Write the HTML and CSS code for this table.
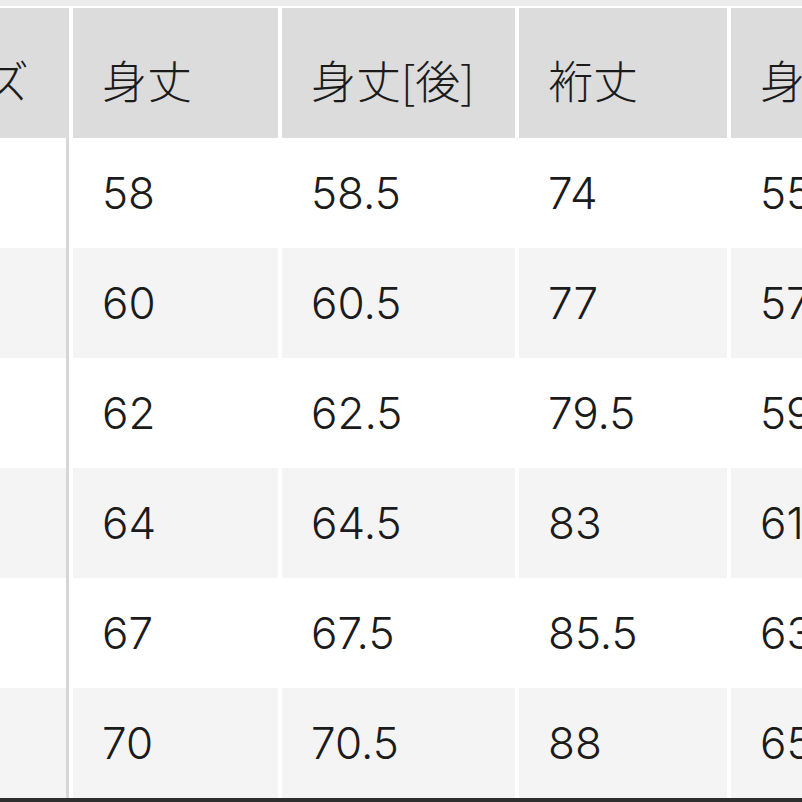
FILE: index.html
```html
<!DOCTYPE html>
<html lang="ja">
<head>
<meta charset="utf-8">
<link rel="stylesheet" href="styles.css">
</head>
<body>
<div class="page">
  <div class="top-strip"></div>
  <div class="table">
    <div class="row head">
      <div class="cell key"><span>サイズ</span></div>
      <div class="cell">身丈</div>
      <div class="cell">身丈[後]</div>
      <div class="cell">裄丈</div>
      <div class="cell">身幅</div>
    </div>
    <div class="row">
      <div class="cell key"><span>XS</span></div>
      <div class="cell">58</div>
      <div class="cell">58.5</div>
      <div class="cell">74</div>
      <div class="cell">55</div>
    </div>
    <div class="row alt">
      <div class="cell key"><span>S</span></div>
      <div class="cell">60</div>
      <div class="cell">60.5</div>
      <div class="cell">77</div>
      <div class="cell">57</div>
    </div>
    <div class="row">
      <div class="cell key"><span>M</span></div>
      <div class="cell">62</div>
      <div class="cell">62.5</div>
      <div class="cell">79.5</div>
      <div class="cell">59</div>
    </div>
    <div class="row alt">
      <div class="cell key"><span>L</span></div>
      <div class="cell">64</div>
      <div class="cell">64.5</div>
      <div class="cell">83</div>
      <div class="cell">61</div>
    </div>
    <div class="row">
      <div class="cell key"><span>XL</span></div>
      <div class="cell">67</div>
      <div class="cell">67.5</div>
      <div class="cell">85.5</div>
      <div class="cell">63</div>
    </div>
    <div class="row alt">
      <div class="cell key"><span>XXL</span></div>
      <div class="cell">70</div>
      <div class="cell">70.5</div>
      <div class="cell">88</div>
      <div class="cell">65</div>
    </div>
  </div>
  <div class="bottom-bar"></div>
</div>
</body>
</html>
```
FILE: styles.css
```css
html, body {
  margin: 0;
  padding: 0;
  background: #ffffff;
}

.page {
  width: 802px;
  height: 802px;
  overflow: hidden;
  display: flex;
  flex-direction: column;
}

.top-strip {
  height: 6px;
  background: #ececec;
  flex: none;
}

.table {
  margin-top: 2px;
  display: flex;
  flex-direction: column;
  flex: none;
}

.row {
  display: grid;
  grid-template-columns: 69px 205px 233px 208px 240px;
  column-gap: 4px;
  height: 110px;
  color: #1b1b1b;
  font-family: "Inter", "Noto Sans CJK JP", sans-serif;
  font-size: 44px;
  font-weight: 300;
}

.row.head {
  height: 130px;
  font-family: "Noto Sans CJK JP", sans-serif;
  font-size: 45px;
  font-weight: 300;
}

.cell {
  display: flex;
  align-items: center;
  padding-left: 29px;
  white-space: nowrap;
  overflow: hidden;
  box-sizing: border-box;
}

.head .cell {
  background: #dcdcdc;
  padding-top: 12px;
}

.row.alt .cell {
  background: #f4f4f4;
}

.cell.key {
  padding-left: 0;
  padding-right: 40px;
  justify-content: flex-end;
}

.row:not(.head) .cell.key {
  border-right: 3px solid #d6d6d6;
  color: transparent;
}

.bottom-bar {
  height: 4px;
  background: #2e2e2e;
  flex: none;
}
```
